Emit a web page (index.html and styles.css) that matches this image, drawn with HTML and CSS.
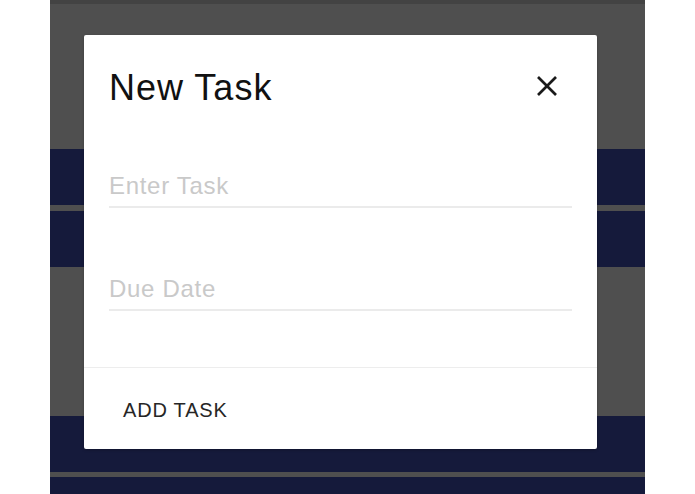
FILE: index.html
```html
<!DOCTYPE html>
<html lang="en">
<head>
<meta charset="utf-8">
<title>New Task</title>
<link rel="stylesheet" href="styles.css">
</head>
<body>
<div class="screen">
  <div class="topbar"></div>
  <div class="spacer spacer-top"></div>
  <div class="row"></div>
  <div class="gap gap-6"></div>
  <div class="row"></div>
  <div class="spacer spacer-mid"></div>
  <div class="row"></div>
  <div class="gap gap-5"></div>
  <div class="row"></div>
</div>

<div class="modal">
  <div class="modal-content">
    <div class="modal-header">
      <h4 class="modal-title">New Task</h4>
      <svg class="close" width="22" height="22" viewBox="0 0 22 22" aria-label="Close">
        <line x1="2" y1="2" x2="20" y2="20"/>
        <line x1="20" y1="2" x2="2" y2="20"/>
      </svg>
    </div>
    <div class="field field-first">
      <input class="text-input" type="text" placeholder="Enter Task">
    </div>
    <div class="field field-second">
      <input class="text-input" type="text" placeholder="Due Date">
    </div>
  </div>
  <div class="modal-footer">
    <span class="footer-btn">ADD TASK</span>
  </div>
</div>
</body>
</html>
```
FILE: styles.css
```css
html, body {
  margin: 0;
  padding: 0;
  background: #ffffff;
  font-family: "Liberation Sans", Arial, sans-serif;
}

.screen {
  margin-left: 50px;
  width: 595px;
  height: 494px;
  background: #4f4f4f;
  display: flex;
  flex-direction: column;
  overflow: hidden;
}

.topbar {
  height: 4px;
  background: #434343;
  flex: none;
}

.spacer-top { height: 145px; flex: none; }
.spacer-mid { height: 149px; flex: none; }

.row {
  height: 56px;
  background: #151a3b;
  flex: none;
}

.gap-6 { height: 6px; flex: none; }
.gap-5 { height: 5px; flex: none; }

.modal {
  position: absolute;
  left: 84px;
  top: 35px;
  width: 513px;
  height: 414px;
  background: #ffffff;
  border-radius: 2px;
  box-shadow: 0 1px 3px rgba(0, 0, 0, 0.25);
  display: flex;
  flex-direction: column;
  box-sizing: border-box;
}

.modal-content {
  padding: 33px 25px 0 25px;
}

.modal-header {
  display: flex;
  justify-content: space-between;
  align-items: flex-start;
  height: 40px;
}

.modal-title {
  margin: 0 0 0 0;
  font-size: 36px;
  line-height: 40px;
  font-weight: normal;
  letter-spacing: 1px;
  color: #111111;
}

.close {
  margin-top: 7px;
  margin-right: 14px;
  stroke: #1a1a1a;
  stroke-width: 2.6;
  stroke-linecap: butt;
}

.field-first { margin-top: 63px; }
.field-second { margin-top: 66px; }

.text-input {
  display: block;
  width: 100%;
  box-sizing: content-box;
  height: 30px;
  padding: 0 0 5px 0;
  margin: 0;
  border: none;
  border-bottom: 2px solid #ebebeb;
  outline: none;
  background: transparent;
  font-family: "Liberation Sans", Arial, sans-serif;
  font-size: 24px;
  letter-spacing: 0.7px;
  color: #333333;
}

.text-input::placeholder {
  color: #c9c9c9;
}

.modal-footer {
  margin-top: 56px;
  border-top: 1px solid #ededed;
  padding: 30px 0 0 39px;
}

.footer-btn {
  font-size: 20px;
  line-height: 24px;
  letter-spacing: 0.8px;
  color: #262626;
  display: inline-block;
}
```
